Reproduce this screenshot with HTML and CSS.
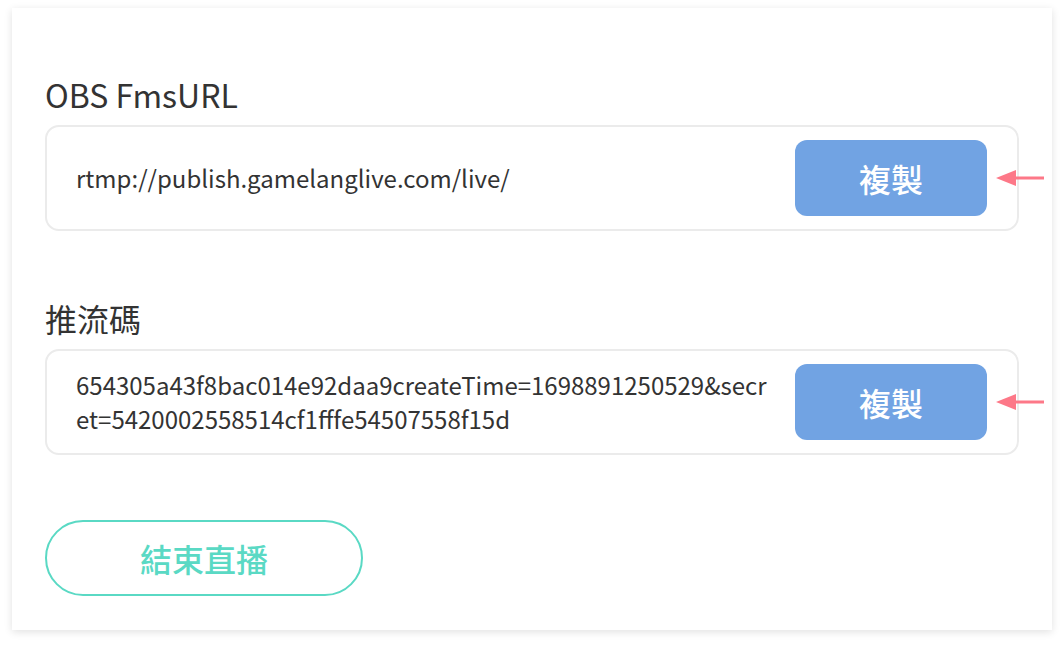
FILE: index.html
```html
<!DOCTYPE html>
<html lang="zh-Hant">
<head>
    <meta charset="UTF-8">
    <meta name="viewport" content="width=device-width, initial-scale=1.0">
    <title>推流設定</title>
    <link rel="stylesheet" href="styles.css">
</head>
<body>
    <div class="card">
        <div class="field">
            <div class="field-label">OBS FmsURL</div>
            <div class="field-box">
                <div class="field-value">rtmp://publish.gamelanglive.com/live/</div>
                <button type="button" class="copy-btn">複製</button>
                <svg class="pointer" width="48" height="18" viewBox="0 0 48 18">
                    <polygon points="0,9 20,1 20,17" fill="#fd7888"/>
                    <rect x="18" y="7.5" width="30" height="3" fill="#fd7888"/>
                </svg>
            </div>
        </div>

        <div class="field">
            <div class="field-label">推流碼</div>
            <div class="field-box">
                <div class="field-value">654305a43f8bac014e92daa9createTime=1698891250529&amp;secret=5420002558514cf1fffe54507558f15d</div>
                <button type="button" class="copy-btn">複製</button>
                <svg class="pointer" width="48" height="18" viewBox="0 0 48 18">
                    <polygon points="0,9 20,1 20,17" fill="#fd7888"/>
                    <rect x="18" y="7.5" width="30" height="3" fill="#fd7888"/>
                </svg>
            </div>
        </div>

        <button type="button" class="end-btn">結束直播</button>
    </div>
</body>
</html>
```

FILE: styles.css
```css
body {
    margin: 0;
    padding: 8px 12px 16px;
    background-color: #ffffff;
    font-family: "Noto Sans CJK TC", "Noto Sans", sans-serif;
    color: #333;
}
.card {
    width: 1040px;
    box-sizing: border-box;
    padding: 66px 33px 34px;
    background-color: #fff;
    box-shadow: 0 2px 8px rgba(0,0,0,0.12);
}
.field {
    margin-bottom: 67px;
}
.field + .field {
    margin-bottom: 65px;
}
.field-label {
    font-size: 32px;
    line-height: 40px;
    margin-bottom: 11px;
    color: #333;
}
.field-box {
    position: relative;
    display: flex;
    align-items: center;
    height: 106px;
    box-sizing: border-box;
    padding: 0 30px 0 29px;
    border: 2px solid #ebebeb;
    border-radius: 14px;
}
.field-value {
    flex: 1;
    margin-right: 26px;
    font-size: 24px;
    line-height: 34px;
    word-break: break-all;
    color: #333;
}
.copy-btn {
    flex: none;
    width: 192px;
    height: 76px;
    border: none;
    border-radius: 12px;
    background-color: #71a3e3;
    color: #fff;
    font-family: inherit;
    font-size: 32px;
    font-weight: 500;
    cursor: pointer;
}
.pointer {
    position: absolute;
    right: -27px;
    top: 50%;
    margin-top: -9px;
}
.end-btn {
    display: block;
    width: 318px;
    height: 76px;
    border: 2px solid #5ad9c4;
    border-radius: 38px;
    background-color: #fff;
    color: #5ad9c4;
    font-family: inherit;
    font-size: 32px;
    font-weight: 500;
    cursor: pointer;
}
```
